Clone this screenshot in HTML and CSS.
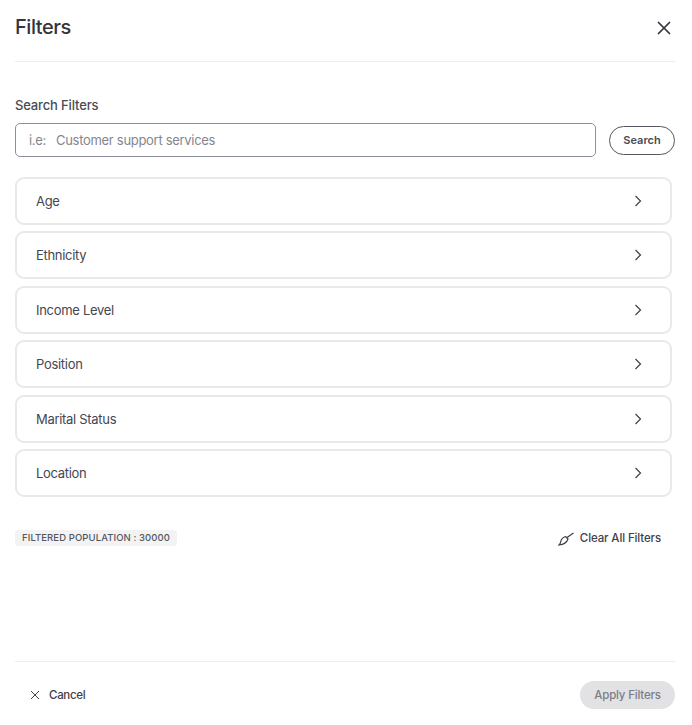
FILE: index.html
```html
<!DOCTYPE html>
<html lang="en">

<head>
    <meta charset="UTF-8">
    <meta name="viewport" content="width=device-width, initial-scale=1.0">
    <title>Filters</title>
    <link rel="stylesheet" href="styles.css">
</head>

<body>
    <div class="modal">
        <div class="head">
            <h1 class="title">Filters</h1>
            <svg class="close" width="14" height="14" viewBox="0 0 14 14">
                <path d="M1.5,1.5 L12.5,12.5 M12.5,1.5 L1.5,12.5"></path>
            </svg>
        </div>

        <div class="search">
            <label class="search-label">Search Filters</label>
            <div class="search-row">
                <div class="input"><span class="hint">i.e:</span><span>Customer support services</span></div>
                <div class="btn-search">Search</div>
            </div>
        </div>

        <div class="list">
            <div class="item">
                <span>Age</span>
                <svg width="9" height="14" viewBox="0 0 9 14"><polyline points="1.5 2 6.5 7 1.5 12"></polyline></svg>
            </div>
            <div class="item">
                <span>Ethnicity</span>
                <svg width="9" height="14" viewBox="0 0 9 14"><polyline points="1.5 2 6.5 7 1.5 12"></polyline></svg>
            </div>
            <div class="item">
                <span>Income Level</span>
                <svg width="9" height="14" viewBox="0 0 9 14"><polyline points="1.5 2 6.5 7 1.5 12"></polyline></svg>
            </div>
            <div class="item">
                <span>Position</span>
                <svg width="9" height="14" viewBox="0 0 9 14"><polyline points="1.5 2 6.5 7 1.5 12"></polyline></svg>
            </div>
            <div class="item">
                <span>Marital Status</span>
                <svg width="9" height="14" viewBox="0 0 9 14"><polyline points="1.5 2 6.5 7 1.5 12"></polyline></svg>
            </div>
            <div class="item">
                <span>Location</span>
                <svg width="9" height="14" viewBox="0 0 9 14"><polyline points="1.5 2 6.5 7 1.5 12"></polyline></svg>
            </div>
        </div>

        <div class="summary">
            <span class="tag">FILTERED POPULATION : 30000</span>
            <div class="clear">
                <svg width="16" height="14" viewBox="0 0 16 14">
                    <path d="M15.5,1 L9,5.5"></path>
                    <path d="M7.5,4.5 L10,7 C9,10 6,12.5 1,13 C3,11.5 2.5,9.5 3.5,7.5 C4.5,6 6,5 7.5,4.5 Z"></path>
                </svg>
                <span>Clear All Filters</span>
            </div>
        </div>

        <div class="foot">
            <div class="cancel">
                <svg width="10" height="10" viewBox="0 0 10 10">
                    <path d="M1,1 L9,9 M9,1 L1,9"></path>
                </svg>
                <span>Cancel</span>
            </div>
            <div class="btn-apply">Apply Filters</div>
        </div>
    </div>
</body>

</html>
```

FILE: styles.css
```css
* {
    box-sizing: border-box;
}

body {
    margin: 0;
    background: #ffffff;
    color: #3f4049;
    font-family: "Inter", "Liberation Sans", sans-serif;
    overflow: hidden;
}

.modal {
    width: 692px;
    height: 725px;
    padding: 0 17px 0 15px;
}

.head {
    display: flex;
    justify-content: space-between;
    align-items: center;
    height: 62px;
    padding: 0 4px 8px 0;
    border-bottom: 1px solid #ececee;
}

.title {
    margin: 0;
    font-size: 20px;
    font-weight: 500;
    letter-spacing: -0.45px;
    color: #33343c;
}

.close {
    fill: none;
    stroke: #33343c;
    stroke-width: 1.7;
    stroke-linecap: round;
    margin-top: 3px;
}

.search {
    padding-top: 34px;
}

.search-label {
    display: block;
    height: 27px;
    font-size: 13px;
    font-weight: 500;
    letter-spacing: -0.15px;
    line-height: 18px;
    color: #4a4b54;
}

.search-row {
    display: flex;
    align-items: center;
    justify-content: space-between;
}

.input {
    display: flex;
    align-items: center;
    gap: 10px;
    width: 581px;
    height: 34px;
    padding: 0 0 1px 13px;
    border: 1px solid #8e8e9c;
    border-radius: 5px;
    font-size: 13px;
    letter-spacing: -0.3px;
    color: #85858f;
}

.btn-search {
    display: flex;
    align-items: center;
    justify-content: center;
    width: 66px;
    height: 29px;
    border: 1px solid #55565f;
    border-radius: 15px;
    font-size: 11px;
    font-weight: 600;
    color: #4a4b54;
}

.list {
    display: flex;
    flex-direction: column;
    gap: 6.4px;
    width: 657px;
    margin-top: 20px;
}

.item {
    display: flex;
    justify-content: space-between;
    align-items: center;
    height: 48px;
    padding: 0 27px 0 19px;
    border: 2px solid #e9e9eb;
    border-radius: 9px;
    font-size: 13px;
    letter-spacing: -0.3px;
    color: #45464f;
}

.item svg {
    fill: none;
    stroke: #3f4049;
    stroke-width: 1.2;
}

.summary {
    display: flex;
    justify-content: space-between;
    align-items: center;
    height: 16px;
    margin-top: 33px;
    padding-right: 14px;
}

.tag {
    height: 16px;
    padding: 0 7px;
    border-radius: 3px;
    background: #f3f3f4;
    font-size: 9.5px;
    font-weight: 500;
    letter-spacing: 0.1px;
    line-height: 16px;
    color: #55565f;
}

.clear {
    display: flex;
    align-items: center;
    gap: 6px;
    font-size: 11.5px;
    font-weight: 500;
    letter-spacing: -0.12px;
    color: #3f4049;
}

.clear svg {
    fill: none;
    stroke: #3f4049;
    stroke-width: 1.2;
    margin-top: 2px;
}

.foot {
    display: flex;
    justify-content: space-between;
    align-items: center;
    height: 64px;
    margin-top: 115px;
    padding: 3px 0 0 15px;
    border-top: 1px solid #ececee;
}

.cancel {
    display: flex;
    align-items: center;
    gap: 9px;
    font-size: 11.5px;
    font-weight: 500;
    letter-spacing: -0.3px;
    color: #3f4049;
}

.cancel svg {
    fill: none;
    stroke: #3f4049;
    stroke-width: 1;
}

.btn-apply {
    display: flex;
    align-items: center;
    justify-content: center;
    width: 95px;
    height: 28px;
    border-radius: 14px;
    background: #e2e2e5;
    font-size: 11.5px;
    font-weight: 500;
    letter-spacing: -0.2px;
    color: #7d7d8a;
}
```
